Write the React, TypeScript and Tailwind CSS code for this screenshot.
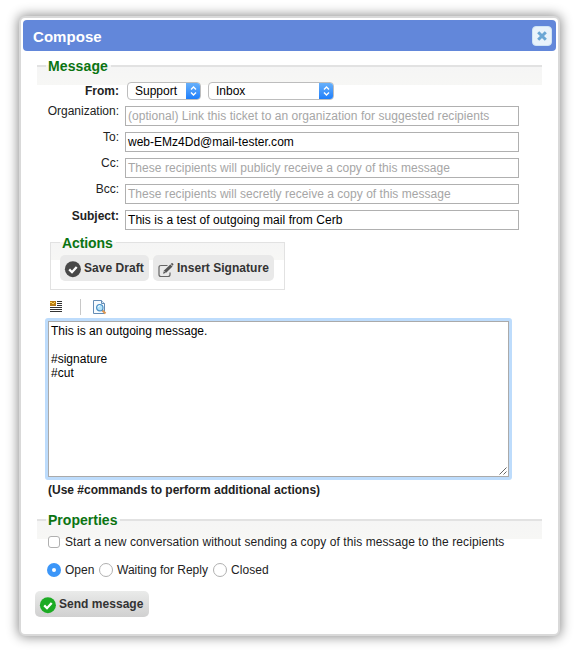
import React from "react";

const labelBase = "w-[84px] shrink-0 text-right leading-[14px] whitespace-nowrap";

function SectionHead({ title, spacing }: { title: string; spacing: string }) {
  return (
    <div className="flex h-[17px] items-start">
      <span className="h-[2px] w-[9px] bg-[#e2e2e2]" />
      <span className={`-mt-[8px] pr-[3px] pl-[2px] text-[14px] leading-[18px] font-bold text-[#0b7412] ${spacing}`}>{title}</span>
      <span className="h-[2px] flex-1 bg-[#e2e2e2]" />
    </div>
  );
}

function Select({ text, width }: { text: string; width: string }) {
  return (
    <div className={`flex h-[18px] overflow-hidden rounded-[4px] border border-[#bdbdbd] bg-white ${width}`}>
      <span className="flex-1 pl-[7px] text-[12px] leading-[17px] text-black">{text}</span>
      <span className="-my-px -mr-px flex w-[15px] items-center justify-center bg-linear-to-b from-[#6bb3fa] to-[#147bfb]">
        <svg width="9" height="12" viewBox="0 0 9 12" fill="none" stroke="white" strokeWidth="1.4">
          <path d="M2 4.5 4.5 2 7 4.5M2 7.5 4.5 10 7 7.5" />
        </svg>
      </span>
    </div>
  );
}

function Field({ label, text, hint, bold, spacing }: { label: string; text: string; hint?: boolean; bold?: boolean; spacing: string }) {
  return (
    <div className="flex h-[26px] items-start gap-[6px]">
      <span className={`${labelBase} ${bold ? "-mt-px font-bold" : "-mt-[2px]"}`}>{label}</span>
      <div className={`h-[20px] w-[394px] border border-[#b0b0b0] pl-[2px] leading-[19px] whitespace-nowrap ${spacing} ${hint ? "text-[#a6a6a6]" : "text-black"}`}>{text}</div>
    </div>
  );
}

function CheckCircle({ color }: { color: string }) {
  return (
    <svg width="17" height="17" viewBox="0 0 17 17">
      <circle cx="8.9" cy="8.2" r="8" fill={color} />
      <path d="m5.2 8.4 2.8 2.8 4.7-5.2" fill="none" stroke="white" strokeWidth="2.3" />
    </svg>
  );
}

function Radio({ checked }: { checked?: boolean }) {
  return (
    <span className={`flex size-[14px] shrink-0 items-center justify-center rounded-full ${checked ? "bg-[#3c96f8]" : "border border-[#b0b0b0] bg-white"}`}>
      {checked && <span className="size-[4px] rounded-full bg-white" />}
    </span>
  );
}

export default function App() {
  return (
    <div className="h-[657px] w-[574px] overflow-hidden bg-white pt-[16px] pl-[19px] font-['Liberation_Sans',Arial,sans-serif] text-[12px] text-[#222]">
      <div className="h-[620px] w-[541px] rounded-[6px] border-2 border-[#d9d9d9] bg-white pt-[2px] shadow-[0_0_12px_1px_#8c8c8c]">
        <header className="ml-[2px] flex h-[31px] w-[533px] items-center justify-between rounded-[4px] bg-[#6287da] pr-[4px] pl-[10px]">
          <h1 className="pt-[2px] text-[15px] leading-[18px] font-bold tracking-[0.05px] text-white">Compose</h1>
          <span className="mt-px flex size-[20px] items-center justify-center rounded-[4px] border border-[#cfe4f5] bg-[#e9f3fb]">
            <svg width="10" height="10" viewBox="0 0 10 10" stroke="#6ba7d5" strokeWidth="3">
              <path d="m1.2 1.2 7.6 7.6M8.8 1.2 1.2 8.8" />
            </svg>
          </span>
        </header>

        <section className="mt-[14px] ml-[16px] h-[177px] w-[505px] bg-[linear-gradient(#f5f5f5,#f7f7f5)] bg-[length:100%_20px] bg-no-repeat">
          <SectionHead title="Message" spacing="tracking-[0.12px]" />
          <div className="ml-[-2px] flex h-[24px] items-start">
            <span className={`${labelBase} mt-[2px] font-bold`}>From:</span>
            <div className="ml-[8px] flex gap-[7px]">
              <Select text="Support" width="w-[74px]" />
              <Select text="Inbox" width="w-[126px]" />
            </div>
          </div>
          <div className="ml-[-2px]">
            <Field label="Organization:" text="(optional) Link this ticket to an organization for suggested recipients" hint spacing="tracking-[0.045px]" />
            <Field label="To:" text="web-EMz4Dd@mail-tester.com" spacing="tracking-[0.01px]" />
            <Field label="Cc:" text="These recipients will publicly receive a copy of this message" hint spacing="tracking-[0.04px]" />
            <Field label="Bcc:" text="These recipients will secretly receive a copy of this message" hint spacing="tracking-[0.03px]" />
            <Field label="Subject:" text="This is a test of outgoing mail from Cerb" bold spacing="tracking-[0.06px]" />
          </div>
        </section>

        <section className="ml-[29px] h-[48px] w-[235px] border border-t-0 border-[#e2e2e2] bg-[linear-gradient(#f5f5f5,#f7f7f5)] bg-[length:100%_18px] bg-no-repeat">
          <div className="flex h-[13px] items-start">
            <span className="h-px w-[9px] bg-[#e2e2e2]" />
            <span className="-mt-[8px] pr-[3px] pl-[2px] text-[14px] leading-[18px] font-bold tracking-[-0.1px] text-[#0b7412]">Actions</span>
            <span className="h-px flex-1 bg-[#e2e2e2]" />
          </div>
          <div className="ml-[9px] flex gap-[4px] text-[12px] font-bold text-[#333]">
            <button className="flex h-[26px] w-[89px] items-center gap-[3px] rounded-[5px] bg-[#e9e9e9] pl-[4px] whitespace-nowrap">
              <span className="mt-[2px]"><CheckCircle color="#484848" /></span>
              <span className="tracking-[0.05px]">Save Draft</span>
            </button>
            <button className="flex h-[26px] w-[121px] items-center gap-[3px] rounded-[5px] bg-[#e9e9e9] pl-[5px] whitespace-nowrap">
              <svg className="mt-[4px]" width="16" height="15" viewBox="0 0 16 15" fill="none" stroke="#666">
                <path d="M9.5 2.5H3Q1 2.5 1 4.5v7q0 2 2 2h7q2 0 2-2V9.5" strokeWidth="1.2" />
                <path d="M5 10.8 6 7.4 12.3 1.4l2.2 2.1-6.3 6.2z" fill="#555" stroke="none" />
                <path d="m12.8.9.7-.7q.7-.4 1.4.2.9.9.3 1.7l-.5.6z" fill="#555" stroke="none" />
                <path d="m6.4 8.3 1.2 1.2" stroke="#eee" strokeWidth=".8" />
              </svg>
              <span className="tracking-[0.03px]">Insert Signature</span>
            </button>
          </div>
        </section>

        <div className="mt-[9px] ml-[29px] flex h-[20px] items-start">
          <svg className="mt-[2px]" width="12" height="12" viewBox="0 0 12 12">
            <path d="M7 .5h5M7 2.5h5M7 4.5h5M0 6.5h12M0 8.5h12M0 10.5h12" stroke="#333" />
            <path d="M0 0h6v5H0z" fill="#b77b16" />
            <path d="M0 1h2v1H0zM2 2h2v1H2zM4 1h1v1H4z" fill="#ffd75a" />
          </svg>
          <span className="ml-[18px] h-[16px] w-px bg-[#c8c8c8]" />
          <svg className="ml-[12px] mt-px" width="14" height="15" viewBox="0 0 14 15">
            <path d="M.5.5h8l3 3v10H.5z" fill="#f7fbfe" stroke="#648cb5" />
            <path d="M8.5.5v3h3" fill="#d7e8f5" stroke="#648cb5" />
            <path d="m9 10 3.5 3.5" stroke="#dc9854" strokeWidth="2.2" />
            <circle cx="6.8" cy="7.7" r="3.2" fill="#b6e4fa" stroke="#4b8fc5" strokeWidth="1.2" />
            <path d="M5 7.2q.4-1.4 1.8-1.5" stroke="white" fill="none" />
          </svg>
        </div>

        <div className="relative mt-[2px] ml-[27px] h-[156px] w-[461px] border border-[#aaa] bg-white pt-[2px] pl-[2px] leading-[14px] tracking-[0.01px] whitespace-pre text-black">
          <span className="pointer-events-none absolute -inset-[4px] rounded-[3px] border-3 border-[#bddcfc]" />
          {"This is an outgoing message.\n\n#signature\n#cut"}
          <svg className="absolute right-px bottom-px" width="8" height="8" viewBox="0 0 8 8" stroke="#555" strokeWidth=".9">
            <path d="M.5 7.5l7-7M4.5 7.5l3-3" />
          </svg>
        </div>
        <p className="mt-[6px] ml-[27px] leading-[14px] font-bold whitespace-nowrap">(Use #commands to perform additional actions)</p>

        <section className="mt-[22px] ml-[16px] h-[72px] w-[505px] bg-[linear-gradient(#f5f5f5,#f7f7f5)] bg-[length:100%_20px] bg-no-repeat">
          <SectionHead title="Properties" spacing="tracking-[0.02px]" />
          <div className="ml-[11px] flex h-[12px] items-center gap-[5px] leading-[12px] whitespace-nowrap">
            <span className="size-[12px] shrink-0 rounded-[3px] border border-[#b0b0b0] bg-white" />
            <span className="tracking-[0.08px]">Start a new conversation without sending a copy of this message to the recipients</span>
          </div>
          <div className="mt-[15px] ml-[10px] flex h-[14px] items-center leading-[14px] whitespace-nowrap">
            <Radio checked />
            <span className="ml-[4px] w-[34px]">Open</span>
            <Radio />
            <span className="ml-[4px] w-[96px]">Waiting for Reply</span>
            <Radio />
            <span className="ml-[4px] tracking-[0.08px]">Closed</span>
          </div>
        </section>

        <button className="ml-[14px] flex h-[26px] w-[114px] items-center gap-[3px] rounded-[5px] bg-linear-to-b from-[#eaebea] to-[#d0d0d0] pl-[4px] text-[12px] font-bold whitespace-nowrap text-[#333]">
          <span className="mt-[2px]"><CheckCircle color="#1cab24" /></span>
          <span className="tracking-[0.03px]">Send message</span>
        </button>
      </div>
    </div>
  );
}
